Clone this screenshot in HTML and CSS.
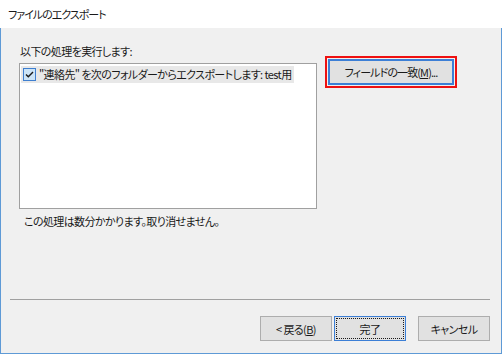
FILE: index.html
```html
<!DOCTYPE html>
<html lang="ja">
<head>
    <meta charset="UTF-8">
    <title>ファイルのエクスポート</title>
    <link rel="stylesheet" href="styles.css">
</head>
<body>
<div class="window">
    <div class="title-bar">ファイルのエクスポート</div>
    <div class="dialog">
        <div class="content">
            <div class="main-col">
                <div class="label">以下の処理を実行します:</div>
                <div class="listbox">
                    <div class="item">
                        <span class="check">
                            <svg width="11" height="11" viewBox="0 0 11 11">
                                <path d="M2 5.5 L4.3 7.8 L9 3" fill="none" stroke="#1a1a1a" stroke-width="1.4"/>
                            </svg>
                        </span>
                        <span class="item-text">"連絡先" を次のフォルダーからエクスポートします: test用</span>
                    </div>
                </div>
                <div class="note">この処理は数分かかります。取り消せません。</div>
            </div>
            <div class="side-col">
                <div class="highlight">
                    <button class="btn btn-map">フィールドの一致(<u>M</u>)...</button>
                </div>
            </div>
        </div>
        <div class="separator"></div>
        <div class="buttons">
            <button class="btn">&lt; 戻る(<u>B</u>)</button>
            <button class="btn btn-default">完了</button>
            <button class="btn btn-cancel">キャンセル</button>
        </div>
    </div>
</div>
</body>
</html>
```

FILE: styles.css
```css
body {
    margin: 0;
    padding: 0;
    font-family: "Noto Sans CJK JP", "Noto Sans", sans-serif;
    font-size: 11px;
    letter-spacing: -0.6px;
    font-feature-settings: "palt";
    color: #1a1a1a;
    background-color: #fff;
}

.window {
    width: 502px;
    height: 354px;
    display: flex;
    flex-direction: column;
    box-sizing: border-box;
}

.title-bar {
    height: 28px;
    line-height: 28px;
    padding-left: 8px;
    letter-spacing: -1px;
    background-color: #fff;
    color: #1a1a1a;
}

.dialog {
    flex: 1;
    background-color: #f0f0f0;
    border-left: 1px solid #5e9ad6;
    border-right: 1px solid #5e9ad6;
    border-bottom: 1px solid #5e9ad6;
    display: flex;
    flex-direction: column;
}

.content {
    display: flex;
    padding: 15px 0 0 18px;
}

.main-col {
    width: 298px;
}

.label {
    height: 20px;
    line-height: 16px;
    padding-left: 1px;
}

.listbox {
    width: 298px;
    height: 146px;
    box-sizing: border-box;
    border: 1px solid #a0a0a0;
    background-color: #fff;
    padding: 2px 0 0 1px;
    overflow: hidden;
}

.item {
    display: inline-flex;
    align-items: center;
    height: 17px;
    background-color: #e8e8e8;
    padding: 0 2px;
}

.check {
    width: 11px;
    height: 11px;
    border: 1px solid #3f7fd0;
    background-color: #cce4f7;
    display: flex;
    margin-right: 3px;
}

.item-text {
    white-space: nowrap;
    line-height: 17px;
}

.note {
    padding: 4px 0 0 5px;
    line-height: 16px;
}

.side-col {
    padding: 0 0 0 8px;
}

.highlight {
    border: 2px solid #ee1111;
    padding: 1px;
    margin-top: 13px;
}

.btn {
    font-family: inherit;
    font-size: 11px;
    letter-spacing: -0.6px;
    font-feature-settings: "palt";
    color: #1a1a1a;
    background-color: #e1e1e1;
    border: 1px solid #adadad;
    height: 25px;
    width: 72px;
    padding: 0;
    margin: 0;
    white-space: nowrap;
}

.btn-map {
    display: block;
    width: 126px;
    height: 26px;
    border: 2px solid #3c7fd6;
    letter-spacing: -0.9px;
}

.separator {
    margin: 70px 11px 0 9px;
    height: 1px;
    background-color: #a0a0a0;
}

.buttons {
    display: flex;
    justify-content: flex-end;
    gap: 2px;
    padding: 16px 11px 0 0;
}

.btn-default {
    border: 1px solid #3c7fd6;
    outline: 1px dotted #1a1a1a;
    outline-offset: -3px;
}

.btn-cancel {
    margin-left: 10px;
}
```
